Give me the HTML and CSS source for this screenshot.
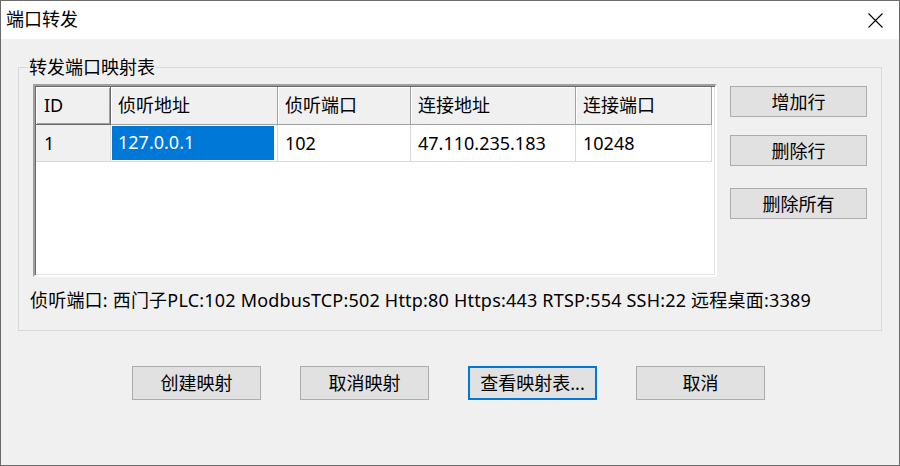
FILE: index.html
```html
<!DOCTYPE html>
<html lang="zh-CN">
<head>
<meta charset="utf-8">
<title>端口转发</title>
<link rel="stylesheet" href="styles.css">
</head>
<body>
<div class="window">
  <div class="titlebar">
    <span class="title">端口转发</span>
    <svg class="close" width="15" height="15" viewBox="0 0 15 15"><path d="M0.5 0.5 L14.5 14.5 M14.5 0.5 L0.5 14.5" stroke="#000" stroke-width="1.1" fill="none"/></svg>
  </div>
  <div class="client">
    <fieldset class="group">
      <legend class="group-label">转发端口映射表</legend>
      <div class="top">
        <div class="list">
          <div class="hrow">
            <div class="hc c1 pressed">ID</div>
            <div class="hc c2">侦听地址</div>
            <div class="hc c3">侦听端口</div>
            <div class="hc c4">连接地址</div>
            <div class="hc c5">连接端口</div>
          </div>
          <div class="row">
            <div class="cell c1 idcell">1</div>
            <div class="cell c2 selcell"><span class="sel">127.0.0.1</span></div>
            <div class="cell c3">102</div>
            <div class="cell c4">47.110.235.183</div>
            <div class="cell c5">10248</div>
          </div>
        </div>
        <div class="side">
          <button class="btn side-btn b-add">增加行</button>
          <button class="btn side-btn b-del">删除行</button>
          <button class="btn side-btn b-delall">删除所有</button>
        </div>
      </div>
      <div class="hint">侦听端口: 西门子PLC:102 ModbusTCP:502 Http:80 Https:443 RTSP:554 SSH:22 远程桌面:3389</div>
    </fieldset>
    <div class="actions">
      <button class="btn act">创建映射</button>
      <button class="btn act">取消映射</button>
      <button class="btn act default">查看映射表...</button>
      <button class="btn act">取消</button>
    </div>
  </div>
</div>
</body>
</html>
```

FILE: styles.css
```css
* { box-sizing: border-box; }
html, body { margin: 0; padding: 0; background: #f0f0f0; }
body {
  font-family: "Noto Sans", "Noto Sans CJK SC", sans-serif;
  font-size: 18px;
  color: #000;
}
.window {
  width: 900px;
  height: 466px;
  border: 1px solid #6b6b6b;
  display: flex;
  flex-direction: column;
  background: #f0f0f0;
}
.titlebar {
  height: 38px;
  background: #fff;
  display: flex;
  align-items: center;
  justify-content: space-between;
  padding: 0 16px 0 5px;
}
.title {
  font-size: 18px;
  line-height: 20px;
  margin-top: -2px;
}
.close { display: block; }
.client {
  flex: 1;
  padding: 18px 16px 0 17px;
  display: flex;
  flex-direction: column;
}
.group {
  margin: 0;
  width: 864px;
  border: 1px solid #d9d9d9;
  padding: 7px 14px 20px 14px;
  min-width: 0;
}
.group-label {
  padding: 0 1px;
  margin-left: -5px;
  line-height: 20px;
  font-size: 18px;
}
.top {
  display: flex;
  gap: 13px;
}
.list {
  width: 684px;
  height: 193px;
  background: #fff;
  border: 2px solid;
  border-color: #a0a0a0 #ffffff #ffffff #a0a0a0;
  box-shadow: inset 1px 1px 0 #696969, inset -1px -1px 0 #e3e3e3;
  padding: 1px 2px 0 1px;
}
.hrow, .row { display: flex; }
.hc {
  height: 38px;
  line-height: 36px;
  padding-left: 7px;
  background: #f0f0f0;
  border-right: 1px solid #a0a0a0;
  border-bottom: 1px solid #a0a0a0;
  box-shadow: inset 1px 1px 0 #fff;
}
.hc.pressed {
  border-right: 1px solid #696969;
  border-bottom: 1px solid #696969;
  box-shadow: inset 1px 1px 0 #fff, inset -1px -1px 0 #a0a0a0;
  padding-left: 8px;
}
.c1 { width: 75px; }
.c2 { width: 167px; }
.c3 { width: 133px; }
.c4 { width: 165px; }
.c5 { width: 136px; }
.cell {
  height: 37px;
  line-height: 36px;
  padding-left: 7px;
  border-right: 1px solid #d9d9d9;
  border-bottom: 1px solid #d9d9d9;
}
.idcell { background: #f0f0f0; padding-left: 8px; }
.selcell { padding: 1px 3px 1px 1px; }
.sel {
  display: block;
  height: 34px;
  line-height: 33px;
  background: #0078d7;
  color: #fff;
  padding-left: 6px;
}
.side {
  width: 137px;
  display: flex;
  flex-direction: column;
  padding-top: 2px;
}
.btn {
  font-family: "Noto Sans", "Noto Sans CJK SC", sans-serif;
  font-size: 18px;
  color: #000;
  background: #e1e1e1;
  border: 1px solid #adadad;
  padding: 0;
  margin: 0;
}
.side-btn {
  height: 31px;
  line-height: 28px;
}
.b-del { margin-top: 18px; }
.b-delall { margin-top: 22px; }
.hint {
  margin-top: 13px;
  margin-left: -3px;
  line-height: 20px;
  letter-spacing: 0.2px;
  white-space: nowrap;
}
.actions {
  display: flex;
  gap: 39px;
  padding-left: 114px;
  margin-top: 35px;
}
.act {
  width: 129px;
  height: 34px;
  line-height: 31px;
}
.act.default {
  border: 2px solid #0078d7;
}
```
